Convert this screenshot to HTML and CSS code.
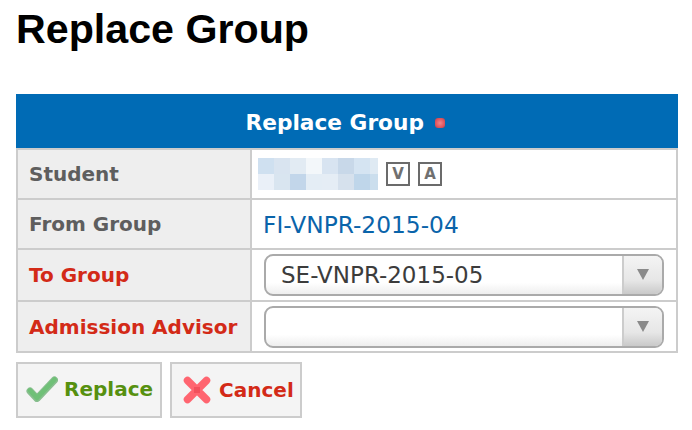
FILE: index.html
```html
<!DOCTYPE html>
<html lang="en">
<head>
    <meta charset="UTF-8">
    <meta name="viewport" content="width=device-width, initial-scale=1.0">
    <title>Replace Group</title>
    <link rel="stylesheet" href="styles.css">
</head>
<body>
    <h1 class="page-title">Replace Group</h1>

    <table class="form-table">
        <colgroup>
            <col class="col-label">
            <col>
        </colgroup>
        <thead>
            <tr>
                <th colspan="2" class="form-head">Replace Group <span class="required-dot"></span></th>
            </tr>
        </thead>
        <tbody>
            <tr>
                <th class="label">Student</th>
                <td class="value">
                    <div class="student">
                        <svg class="blur" width="120" height="32" viewBox="0 0 120 32">
                            <rect x="0" y="0" width="16" height="16" fill="#cfe0f0"/>
                            <rect x="16" y="0" width="16" height="16" fill="#d9e4f0"/>
                            <rect x="32" y="0" width="16" height="16" fill="#e2ebf3"/>
                            <rect x="48" y="0" width="16" height="16" fill="#f3f7fa"/>
                            <rect x="64" y="0" width="16" height="16" fill="#d8e4f1"/>
                            <rect x="80" y="0" width="16" height="16" fill="#c8d8e9"/>
                            <rect x="96" y="0" width="16" height="16" fill="#d5e4f2"/>
                            <rect x="112" y="0" width="8" height="16" fill="#dfeaf3"/>
                            <rect x="0" y="16" width="16" height="16" fill="#eaf0f8"/>
                            <rect x="16" y="16" width="16" height="16" fill="#d9e5f0"/>
                            <rect x="32" y="16" width="16" height="16" fill="#c2d6ea"/>
                            <rect x="48" y="16" width="16" height="16" fill="#e4edf5"/>
                            <rect x="64" y="16" width="16" height="16" fill="#e5edf5"/>
                            <rect x="80" y="16" width="16" height="16" fill="#d6e1ed"/>
                            <rect x="96" y="16" width="16" height="16" fill="#bfd6ea"/>
                            <rect x="112" y="16" width="8" height="16" fill="#cbdeed"/>
                        </svg>
                        <span class="key">V</span>
                        <span class="key">A</span>
                    </div>
                </td>
            </tr>
            <tr>
                <th class="label">From Group</th>
                <td class="value"><a href="#" class="group-link">FI-VNPR-2015-04</a></td>
            </tr>
            <tr class="row-combo">
                <th class="label label-required">To Group</th>
                <td class="value value-combo">
                    <div class="combo">
                        <span class="combo-text">SE-VNPR-2015-05</span>
                        <span class="combo-arrow"><span class="triangle"></span></span>
                    </div>
                </td>
            </tr>
            <tr class="row-combo row-last">
                <th class="label label-required">Admission Advisor</th>
                <td class="value value-combo">
                    <div class="combo">
                        <span class="combo-text"></span>
                        <span class="combo-arrow"><span class="triangle"></span></span>
                    </div>
                </td>
            </tr>
        </tbody>
    </table>

    <div class="actions">
        <a href="#" class="button button-ok">
            <svg class="button-icon" width="32" height="28" viewBox="0 0 32 28">
                <path d="M4 16 L11 23.5 L28.5 5" fill="none" stroke="#3f9a4a" stroke-width="7" stroke-linecap="round" stroke-linejoin="round" opacity="0.6"/>
                <path d="M4 15.5 L11 23 L28.5 4.5" fill="none" stroke="#6fc077" stroke-width="4.5" stroke-linecap="round" stroke-linejoin="round"/>
            </svg>
            <span>Replace</span>
        </a>
        <a href="#" class="button button-cancel">
            <svg class="button-icon" width="28" height="28" viewBox="0 0 28 28">
                <path d="M4.5 4.5 L23.5 23.5 M23.5 4.5 L4.5 23.5" fill="none" stroke="#ff6570" stroke-width="7.5" stroke-linecap="round"/>
                <rect x="11" y="11" width="6" height="6" fill="#e8404c" opacity="0.55"/>
            </svg>
            <span>Cancel</span>
        </a>
    </div>
</body>
</html>
```

FILE: styles.css
```css
body {
    margin: 0;
    padding: 0 14px 0 16px;
    background: #fff;
    font-family: "DejaVu Sans", Verdana, sans-serif;
    font-size: 20px;
    color: #333;
}
.page-title {
    margin: 0;
    height: 94px;
    padding-top: 5px;
    box-sizing: border-box;
    font-family: "Liberation Sans", Arial, sans-serif;
    font-size: 41.2px;
    line-height: 48px;
    font-weight: 700;
    color: #000;
}
.form-table {
    width: 662px;
    border-collapse: separate;
    border-spacing: 0;
    table-layout: fixed;
}
.col-label {
    width: 236px;
}
.form-head {
    height: 54px;
    padding: 3px 4px 0 0;
    box-sizing: border-box;
    background: #006bb5;
    color: #fff;
    font-size: 21.7px;
    font-weight: 700;
    text-align: center;
}
.required-dot {
    display: inline-block;
    width: 10px;
    height: 10px;
    margin-left: 3px;
    background: radial-gradient(#f0868c, #e0555e 60%, #b03c48);
    border-radius: 3px;
    vertical-align: 2px;
}
.label {
    height: 48px;
    padding: 0 0 0 11px;
    background: #eee;
    border-top: 2px solid #ccc;
    border-left: 2px solid #ccc;
    border-right: 2px solid #ccc;
    text-align: left;
    font-weight: 700;
    color: #5e5e5e;
    white-space: nowrap;
}
.row-combo .label {
    height: 50px;
}
.row-last .label {
    height: 49px;
    border-bottom: 2px solid #ccc;
}
.label-required {
    color: #d32a17;
}
.value {
    padding: 0 12px;
    border-top: 2px solid #ccc;
    border-right: 2px solid #ccc;
}
.row-last .value {
    border-bottom: 2px solid #ccc;
}
.value-combo {
    vertical-align: top;
    padding-top: 4px;
}
.student {
    display: flex;
    align-items: center;
    gap: 8px;
    margin-left: -6px;
}
.blur {
    display: block;
}
.key {
    display: flex;
    align-items: center;
    justify-content: center;
    width: 24px;
    height: 24px;
    box-sizing: border-box;
    border: 2px solid #6b6b6b;
    font-size: 15px;
    font-weight: 700;
    color: #707070;
}
.group-link {
    margin-left: -1px;
    color: #0a64aa;
    font-size: 23.3px;
    text-decoration: none;
}
.combo {
    display: flex;
    height: 42px;
    box-sizing: border-box;
    border: 2px solid #aaa;
    border-radius: 9px;
    background: linear-gradient(#fff 70%, #eee);
}
.combo-text {
    flex: 1;
    padding-left: 15px;
    font-size: 23px;
    line-height: 38px;
    color: #3c3c3c;
}
.combo-arrow {
    display: flex;
    align-items: center;
    justify-content: center;
    width: 38px;
    border-left: 2px solid #ccc;
    border-radius: 0 7px 7px 0;
    background: linear-gradient(#f4f4f4, #e6e6e6 65%, #c9c9c9);
}
.triangle {
    width: 0;
    height: 0;
    border-left: 6px solid transparent;
    border-right: 6px solid transparent;
    border-top: 11px solid #8a8a8a;
    margin-top: -2px;
}
.actions {
    display: flex;
    gap: 8px;
    margin-top: 9px;
}
.button {
    display: flex;
    align-items: center;
    height: 56px;
    box-sizing: border-box;
    background: #f4f4f4;
    border: 2px solid #ccc;
    font-weight: 700;
    text-decoration: none;
}
.button-icon {
    filter: blur(0.5px);
}
.button-ok {
    gap: 6px;
    padding: 0 7px 2px 8px;
    color: #56900f;
}
.button-cancel {
    gap: 8px;
    padding: 0 6px 0 11px;
    color: #d32a17;
}
```
